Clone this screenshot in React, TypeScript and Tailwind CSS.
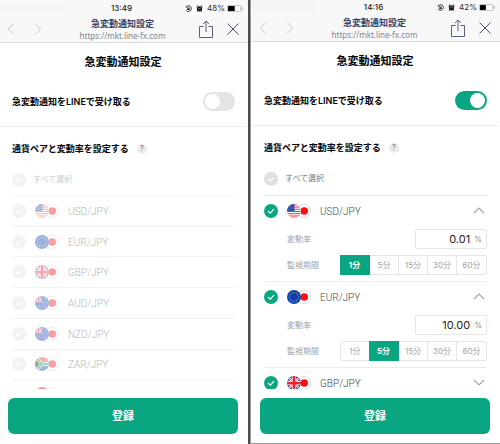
import { useState } from "react";
import type { ReactNode } from "react";

type PairCode = "USD" | "EUR" | "GBP" | "AUD" | "NZD" | "ZAR" | "TRY";

const PAIRS: PairCode[] = ["USD", "EUR", "GBP", "AUD", "NZD", "ZAR"];
const PERIODS = ["1分", "5分", "15分", "30分", "60分"];

/* ---------- flags ---------- */

function UnionJack() {
  return (
    <>
      <rect width="28" height="28" fill="#1c3f94" />
      <path d="M0 0L28 28M28 0L0 28" stroke="#fff" strokeWidth="4" />
      <path d="M0 0L28 28M28 0L0 28" stroke="#e8262d" strokeWidth="1.6" />
      <path d="M14 0V28M0 14H28" stroke="#fff" strokeWidth="9" />
      <path d="M14 0V28M0 14H28" stroke="#e8262d" strokeWidth="5.5" />
    </>
  );
}

function SouthernFlag({ stars }: { stars: string }) {
  return (
    <>
      <rect width="28" height="28" fill="#1b45b8" />
      <svg x="0" y="2" width="14" height="11" viewBox="0 0 28 28" preserveAspectRatio="none">
        <UnionJack />
      </svg>
      {[[20, 7], [24, 13], [17, 13], [20, 21], [8, 20]].map(([x, y]) => (
        <circle key={x + "-" + y} cx={x} cy={y} r="1" fill={stars} />
      ))}
    </>
  );
}

const FLAGS: Record<PairCode, ReactNode> = {
  USD: (
    <>
      <rect width="28" height="28" fill="#fff" />
      <path
        d="M0 1.5H28M0 6H28M0 10.5H28M0 15H28M0 19.5H28M0 24H28M0 28H28"
        stroke="#e8363d"
        strokeWidth="2.4"
      />
      <rect width="15" height="14" fill="#2b4fb3" />
      <path d="M4 5H14M3 8H14M2 11H14" stroke="#8ea3d6" strokeWidth="0.8" strokeDasharray="1 2" />
    </>
  ),
  EUR: (
    <>
      <rect width="28" height="28" fill="#0b3fb3" />
      {Array.from({ length: 12 }).map((_, i) => (
        <circle
          key={i}
          cx={14 + 9 * Math.cos((i * Math.PI) / 6)}
          cy={14 + 9 * Math.sin((i * Math.PI) / 6)}
          r="1.1"
          fill="#d9c93c"
        />
      ))}
    </>
  ),
  GBP: <UnionJack />,
  AUD: <SouthernFlag stars="#fff" />,
  NZD: <SouthernFlag stars="#f08a90" />,
  ZAR: (
    <>
      <rect width="28" height="14" fill="#f8362b" />
      <rect y="14" width="28" height="14" fill="#1b45b8" />
      <path d="M0 0L13 14L0 28M12 14H28" stroke="#fff" strokeWidth="8" fill="none" />
      <path d="M0 4L10 14L0 24Z" fill="#222" />
      <path d="M0 3L11 14L0 25" stroke="#f2b632" strokeWidth="2" fill="none" />
      <path d="M1 1L14 14L1 27M13 14H28" stroke="#12a24f" strokeWidth="5" fill="none" />
    </>
  ),
  TRY: (
    <>
      <rect width="28" height="28" fill="#e30a17" />
      <circle cx="12" cy="14" r="6" fill="#fff" />
      <circle cx="14" cy="14" r="5" fill="#e30a17" />
    </>
  ),
};

function PairFlags({ code }: { code: PairCode }) {
  return (
    <span className="flex shrink-0">
      <svg viewBox="0 0 28 28" className="z-10 size-3.5 rounded-full" aria-hidden="true">
        {FLAGS[code]}
      </svg>
      <svg viewBox="0 0 28 28" className="-ml-1 size-3.5" aria-hidden="true">
        <circle cx="14" cy="14" r="13" fill="#fff" stroke="#d2d2d2" strokeWidth="1.8" />
        <circle cx="14.5" cy="14" r="7.5" fill="#fb0d12" />
      </svg>
    </span>
  );
}

/* ---------- browser chrome ---------- */

function StatusBar({ time, battery }: { time: string; battery: number }) {
  return (
    <div className="grid h-3.5 grid-cols-3 items-center pr-[3px] text-[8px] leading-[14px] text-[#1c1c1c]">
      <span className="h-3 w-16 self-start bg-[#f5f5f5]" />
      <span className="text-center font-medium">{time}</span>
      <span className="flex items-center justify-end text-[#333]">
        <svg viewBox="0 0 14 14" className="mr-1 size-[7px]" fill="none" stroke="#222" aria-hidden="true">
          <path d="M3 3A5.8 5.8 0 1 1 2 10" strokeWidth="1.5" />
          <path d="M0.5 4.5L3.5 1.5L5 5Z" fill="#222" stroke="none" />
          <rect x="4.5" y="6.5" width="5" height="3.6" fill="#222" stroke="none" />
          <path d="M5.4 6.5V5.2A1.6 1.6 0 0 1 8.6 5.2V6.5" strokeWidth="1" />
        </svg>
        <svg viewBox="0 0 14 14" className="mr-1 size-[7px]" aria-hidden="true">
          <circle cx="7" cy="7.6" r="5.2" fill="#111" />
          <path d="M1 4L4 1.2M13 4L10 1.2M3.6 11.6L2.4 13.4M10.4 11.6L11.6 13.4" stroke="#111" strokeWidth="2" />
          <path d="M4.6 6L7 8L9.6 5.4" stroke="#fff" strokeWidth="1.1" fill="none" />
        </svg>
        <span className="mr-0.5">{battery}%</span>
        <svg viewBox="0 0 32 14" className="h-[7px] w-4" aria-hidden="true">
          <rect x="0.75" y="0.75" width="27" height="12.5" rx="2.5" fill="#fff" stroke="#aaa" strokeWidth="1.5" />
          <rect x="2" y="2" width={battery * 0.28} height="10" rx="1" fill="#000" />
          <path d="M30 4.5V9.5" stroke="#999" strokeWidth="2" />
        </svg>
      </span>
    </div>
  );
}

function NavBar() {
  return (
    <div className="grid h-[27px] grid-cols-[1fr_auto_1fr] items-center pr-[7px] pl-1.5 text-center">
      <div className="flex gap-[17px]">
        {["M7.5 1L1.5 7L7.5 13", "M1.5 1L7.5 7L1.5 13"].map((d, i) => (
          <button key={d} aria-label={i === 0 ? "戻る" : "進む"} className="px-px">
            <svg viewBox="0 0 9 14" className="h-3.5 w-2" fill="none" stroke="#b9bcc2">
              <path d={d} />
            </svg>
          </button>
        ))}
      </div>
      <div>
        <p className="text-[9px] leading-[14px] font-semibold text-[#38425e]">急変動通知設定</p>
        <p className="font-['Noto_Sans'] text-[8px] leading-[10px] text-[#83878f]">https://mkt.line-fx.com</p>
      </div>
      <div className="flex items-center justify-end gap-3.5">
        <button aria-label="共有">
          <svg viewBox="0 0 14 18" className="h-[18px] w-3.5" fill="none" stroke="#59617a">
            <path d="M4.5 6.5H0.5V17.5H13.5V6.5H9.5M7 12V1M4 4L7 1L10 4" />
          </svg>
        </button>
        <button aria-label="閉じる">
          <svg viewBox="0 0 12 12" className="size-3" fill="none" stroke="#454e69">
            <path d="M0.5 0.5L11.5 11.5M11.5 0.5L0.5 11.5" />
          </svg>
        </button>
      </div>
    </div>
  );
}

/* ---------- form parts ---------- */

function RoundCheck({
  id,
  checked,
  onChange,
}: {
  id: string;
  checked: boolean;
  onChange: () => void;
}) {
  return (
    <span className="grid size-3.5 shrink-0">
      <input
        id={id}
        type="checkbox"
        checked={checked}
        onChange={onChange}
        className="col-start-1 row-start-1 size-3.5 appearance-none rounded-full bg-[#e0e0e0] checked:bg-[#0aa682]"
      />
      <svg
        viewBox="0 0 14 14"
        className="pointer-events-none z-10 col-start-1 row-start-1 size-3.5"
        fill="none"
        stroke="#fff"
        strokeWidth="1.2"
      >
        <path d="M4 7L6.3 9.2L10 5.2" />
      </svg>
    </span>
  );
}

function PairDetail({ id, rate, period }: { id: string; rate: string; period: string }) {
  const [value, setValue] = useState(rate);
  const [selected, setSelected] = useState(period);

  return (
    <div className="flex flex-col gap-1.5 pt-1 pb-1.5 pl-[23px] text-[8px] text-[#a3a3a3]">
      <div className="flex h-5 items-center justify-between">
        <label htmlFor={id + "-rate"}>変動率</label>
        <span className="flex h-5 w-[72px] items-center rounded-xs border border-[#e6e6e6] pr-1">
          <input
            id={id + "-rate"}
            value={value}
            onChange={(e) => setValue(e.target.value)}
            className="w-full min-w-0 bg-transparent text-right text-[11px] text-[#222] outline-none"
          />
          <span className="pl-1 text-[#888]">%</span>
        </span>
      </div>
      <div role="radiogroup" aria-label="監視期間" className="flex h-5 items-center justify-between">
        <span>監視期間</span>
        <div className="grid h-5 w-[147px] grid-cols-5 rounded-xs border border-[#e6e6e6]">
          {PERIODS.map((p) => (
            <label
              key={p}
              className="-my-px flex items-center justify-center border-r border-[#e6e6e6] last:border-r-0 has-checked:-ml-px has-checked:border-[#0aa682] has-checked:bg-[#0aa682] has-checked:font-bold has-checked:text-white"
            >
              <input
                type="radio"
                name={id + "-period"}
                checked={selected === p}
                onChange={() => setSelected(p)}
                className="sr-only"
              />
              {p}
            </label>
          ))}
        </div>
      </div>
    </div>
  );
}

function PairRow({
  id,
  code,
  checked,
  onToggle,
}: {
  id: string;
  code: PairCode;
  checked: boolean;
  onToggle: () => void;
}) {
  return (
    <>
      <RoundCheck id={id} checked={checked} onChange={onToggle} />
      <label
        htmlFor={id}
        className="flex items-center gap-[9px] pl-[9px] font-['Roboto'] text-[10px] leading-[10px] font-light text-[#444]"
      >
        <PairFlags code={code} />
        <span className="pt-0.5">{code}/JPY</span>
      </label>
    </>
  );
}

function Chevron({ open }: { open: boolean }) {
  return (
    <button aria-label="詳細" aria-expanded={open} className="ml-auto pr-0.5">
      <svg viewBox="0 0 12 7" className="h-[7px] w-3" fill="none" stroke="#a5a5a5" strokeWidth="1.2">
        <path d={open ? "M1 6L6 1L11 6" : "M1 1L6 6L11 1"} />
      </svg>
    </button>
  );
}

const DETAILS: { code: PairCode; rate?: string; period?: string }[] = [
  { code: "USD", rate: "0.01", period: "1分" },
  { code: "EUR", rate: "10.00", period: "5分" },
  { code: "GBP" },
];

function Screen({
  id,
  time,
  battery,
  active,
}: {
  id: string;
  time: string;
  battery: number;
  active: boolean;
}) {
  const [enabled, setEnabled] = useState(active);
  const [checked, setChecked] = useState<PairCode[]>(active ? ["USD", "EUR", "GBP"] : []);

  const togglePair = (code: PairCode) =>
    setChecked((prev) =>
      prev.includes(code) ? prev.filter((c) => c !== code) : [...prev, code]
    );

  return (
    <main
      className={`flex min-h-0 min-w-0 flex-col overflow-hidden bg-white ${
        active ? "border-b border-[#9a9a9a]" : ""
      }`}
    >
      <header
        className={`shrink-0 border-b border-[#dcdcdc] bg-[#f8f8f8] pr-0.5 ${active ? "pl-px" : "pt-px"}`}
      >
        <StatusBar time={time} battery={battery} />
        <NavBar />
      </header>

      <div className={`flex min-h-0 flex-1 flex-col pr-0.5 ${active ? "pl-px" : ""}`}>
        <h1 className="shrink-0 text-center text-[11px] leading-[38px] font-semibold text-black">
          急変動通知設定
        </h1>
        <div className="flex shrink-0 items-center justify-between border-b border-[#ececec] pr-[11px] pb-1 pl-3">
          <label htmlFor={id + "-line"} className="text-[9px] leading-[41px] font-semibold text-black">
            急変動通知をLINEで受け取る
          </label>
          <input
            id={id + "-line"}
            type="checkbox"
            role="switch"
            checked={enabled}
            onChange={() => setEnabled(!enabled)}
            className="flex h-[19px] w-8 appearance-none items-center rounded-full bg-[#e4e4e4] px-0.5 before:size-[15px] before:rounded-full before:bg-white checked:justify-end checked:bg-[#0aa682]"
          />
        </div>

        <div className="flex min-h-0 flex-1 flex-col pr-[11px] pl-3">
          <h2 className="flex shrink-0 items-center gap-2 text-[9px] leading-[43px] font-semibold text-black">
            通貨ペアと変動率を設定する
            <button
              aria-label="ヘルプ"
              className="size-2.5 rounded-full bg-[#ebebeb] text-center text-[7px] leading-[10px] text-[#8a8a8a]"
            >
              ?
            </button>
          </h2>

          <fieldset
            disabled={!enabled}
            className="flex min-h-0 flex-1 flex-col overflow-hidden disabled:opacity-40"
          >
            <div
              className={`flex shrink-0 items-center gap-[7px] border-b border-[#e9e9e9] ${
                active ? "pb-[7px]" : "pb-1.5"
              }`}
            >
              <RoundCheck id={id + "-all"} checked={false} onChange={() => setChecked(PAIRS)} />
              <label htmlFor={id + "-all"} className="text-[8px] leading-[19px] text-[#777]">
                すべて選択
              </label>
            </div>

            {active ? (
              <ul>
                {DETAILS.map(({ code, rate, period }) => (
                  <li key={code} className="border-b border-[#ececec]">
                    <div className="flex h-[29px] items-center">
                      <PairRow
                        id={id + "-" + code}
                        code={code}
                        checked={checked.includes(code)}
                        onToggle={() => togglePair(code)}
                      />
                      <Chevron open={!!rate} />
                    </div>
                    {rate && period && (
                      <PairDetail id={id + "-" + code} rate={rate} period={period} />
                    )}
                  </li>
                ))}
              </ul>
            ) : (
              <ul className="grid h-[215px] shrink-0 grid-rows-7">
                {PAIRS.map((code) => (
                  <li key={code} className="flex items-center border-b border-[#e2e2e2]">
                    <PairRow
                      id={id + "-" + code}
                      code={code}
                      checked={checked.includes(code)}
                      onToggle={() => togglePair(code)}
                    />
                  </li>
                ))}
                {/* next pair peeks in above the footer */}
                <li className="pt-[7px] pl-[23px]">
                  <PairFlags code="TRY" />
                </li>
              </ul>
            )}
          </fieldset>
        </div>

        <div className={`shrink-0 px-2 pt-[9px] ${active ? "pb-[9px]" : "pb-2.5"}`}>
          <button className="h-9 w-full rounded-md bg-[#0aa682] text-[11px] font-semibold text-white">
            登録
          </button>
        </div>
      </div>
    </main>
  );
}

export default function App() {
  return (
    <div className="grid h-screen grid-cols-[248fr_3px_249fr] grid-rows-1 font-[Inter,'Noto_Sans_CJK_JP',sans-serif]">
      <Screen id="off" time="13:49" battery={48} active={false} />
      <div className="border-r border-[#9a9a9a] bg-[#4b4b4b]" />
      <Screen id="on" time="14:16" battery={42} active />
    </div>
  );
}
